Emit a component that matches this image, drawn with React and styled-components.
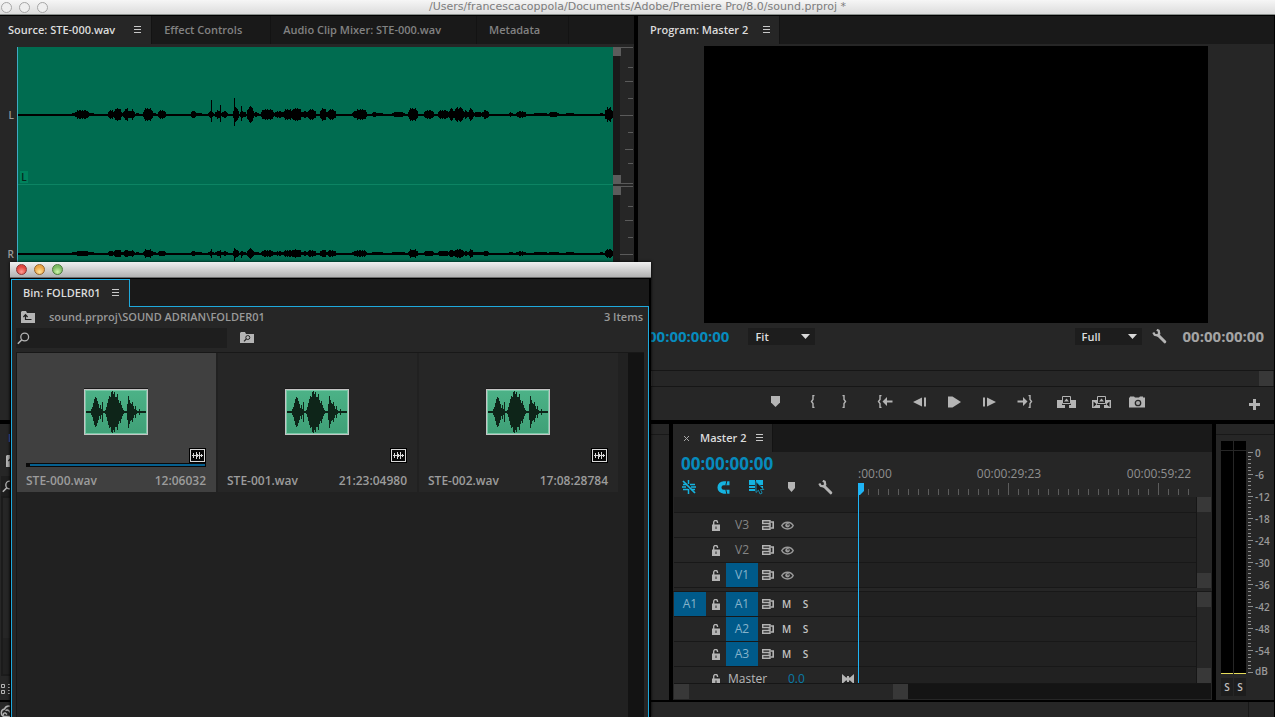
import React from "react";
import styled, { createGlobalStyle } from "styled-components";

const GlobalStyle = createGlobalStyle`
  * {
    box-sizing: border-box;
  }

  body {
    margin: 0;
    background-color: #000000;
    color: #9a9a9a;
    font-family: "Open Sans", "Noto Sans", sans-serif;
    font-size: 11px;
    font-weight: 600;
    line-height: 16px;
    overflow: hidden;
  }

  button,
  input,
  select {
    margin: 0;
    padding: 0;
    border: 0;
    background: none;
    color: inherit;
    font: inherit;
  }

  svg {
    display: block;
  }
`;

/* ---------- layout ---------- */

const StyledApp = styled.div`
  position: relative;
  display: flex;
  flex-direction: column;
  height: 100vh;
  overflow: hidden;
`;

const TitleBar = styled.header`
  display: grid;
  grid-template-columns: 1fr auto 1fr;
  align-items: center;
  height: 15px;
  margin-bottom: 1px;
  background: linear-gradient(#f6f6f6, #dcdcdc);
  border-bottom: 1px solid #8a8f8c;

  h1 {
    margin: 0;
    color: #7d7d7d;
    font-family: "DejaVu Sans", sans-serif;
    font-size: 11px;
    font-weight: 400;
    line-height: 14px;
  }
`;

const Lights = styled.div`
  display: flex;
  gap: 7px;
  padding-left: ${(props) => props.$inset}px;
`;

const Light = styled.button`
  width: 11px;
  height: 11px;
  border: 1px solid ${(props) => props.$edge};
  border-radius: 50%;
  background: ${(props) => props.$fill};
`;

const Workspace = styled.main`
  flex: 1;
  display: grid;
  grid-template-rows: 404fr 276fr;
  gap: 4px;
  min-height: 0;
  padding-right: 1px;
`;

const Row = styled.div`
  display: grid;
  grid-template-columns: ${(props) => props.$columns};
  gap: 4px;
  min-height: 0;
`;

const Panel = styled.section`
  display: flex;
  flex-direction: column;
  min-width: 0;
  min-height: 0;
  background-color: #262626;
  overflow: hidden;
`;

const StatusBar = styled.footer`
  display: flex;
  justify-content: space-between;
  height: 15px;
  margin: 2px 1px 0 0;
  background-color: #262626;

  svg {
    margin-top: 3px;
  }

  div {
    width: 26px;
    border-left: 1px solid #181818;
  }
`;

const TabBar = styled.div`
  display: flex;
  flex: none;
  height: 28px;
  background-color: #191919;
`;

const Tab = styled.button`
  display: flex;
  align-items: center;
  gap: ${(props) => props.$gap}px;
  padding: 0 ${(props) => props.$right}px 0 ${(props) => props.$left}px;
  background-color: ${(props) => (props.$active ? "#262626" : "transparent")};
  color: ${(props) => (props.$active ? "#dcdcdc" : "#828282")};
  border-right: 1px solid #131313;
  white-space: nowrap;
`;

const IconButton = styled.button`
  display: flex;
  flex: none;
  align-items: center;
  justify-content: center;
  width: ${(props) => props.$width || 24}px;
  height: 20px;
  color: ${(props) => props.$color || "#b4b4b4"};
`;

const Timecode = styled.div`
  flex: none;
  padding-bottom: 2px;
  color: ${(props) => props.$color};
  font-size: ${(props) => props.$size}px;
  font-weight: 700;
  line-height: 18px;
`;

/* ---------- source monitor ---------- */

const SourceBody = styled.div`
  display: grid;
  grid-template-columns: 17px 1fr 7px 14px;
  grid-auto-rows: 139px;
  margin-top: 3px;
`;

const ChannelName = styled.span`
  align-self: center;
  padding: 0 3px 4px 0;
  text-align: right;
  font-size: 10px;
  line-height: 14px;
`;

const Channel = styled.div`
  display: flex;
  align-items: flex-end;
  position: relative;
  background: linear-gradient(#006c50 137px, #0c8463 137px, #0c8463 138px, #006c50 138px);
  border-left: 1px solid #3fa9c4;

  svg {
    position: absolute;
    inset: 0;
    width: 100%;
    height: 138px;
  }

  label {
    width: 8px;
    height: 12px;
    margin: 0 0 3px 2px;
    background-color: #00825c;
    color: #06251b;
    font-size: 10px;
    line-height: 12px;
    text-align: center;
  }
`;

const ZoomBar = styled.div`
  display: flex;
  flex-direction: column;
  justify-content: space-between;
  height: 137px;
  background-color: #1a1a1a;

  i {
    width: 8px;
    height: 9px;
    background-color: #5c5c5c;
  }
`;

/* ---------- program monitor ---------- */

const Screen = styled.div`
  flex: 1;
  margin: 2px 66px 0;
  background-color: #000000;
`;

const MonitorBar = styled.div`
  display: flex;
  align-items: center;
  height: 27px;
  padding: 0 10px;
`;

const Spacer = styled.div`
  flex: ${(props) => (props.$width ? `0 0 ${props.$width}px` : 1)};
`;

const SelectBox = styled.label`
  position: relative;
  width: 67px;
  height: 17px;
  margin: 0 8px 0 ${(props) => props.$left}px;
  background-color: #1d1d1d;
  color: #dedede;

  select {
    width: 100%;
    height: 17px;
    padding-left: 7px;
    appearance: none;
    outline: 0;
  }

  svg {
    position: absolute;
    top: 6px;
    right: 5px;
    pointer-events: none;
  }
`;

const MonitorScroll = styled.div`
  display: flex;
  justify-content: space-between;
  height: 17px;
  margin-top: 20px;
  padding-right: 1px;
  border: solid #161616;
  border-width: 1px 0;

  i {
    width: 14px;
    background-color: #383838;
  }
`;

const Transport = styled.div`
  display: grid;
  grid-template-columns: 1fr auto 1fr;
  align-items: center;
  height: 33px;
  padding: 0 4px 4px 0;

  > button {
    justify-self: end;
    margin-top: 5px;
  }
`;

const ButtonGroup = styled.div`
  display: flex;
  gap: 11px;

  & + & {
    margin-left: ${(props) => props.$space}px;
  }
`;

const TransportButtons = styled.div`
  grid-column: 2;
  display: flex;
`;

/* ---------- project panel behind the bin ---------- */

const ProjectEdge = styled.div`
  flex: 1;
  display: flex;
  flex-direction: column;
  padding-left: 1px;
  color: #b4b4b4;
`;

const ProjectTitle = styled.span`
  padding: 6px 0 0 7px;
  color: #4463b8;
`;

const ProjectIcons = styled.div`
  display: flex;
  align-items: center;
  height: ${(props) => props.$height}px;
  padding-left: ${(props) => props.$left}px;
  background-color: ${(props) => props.$fill || "transparent"};
`;

const ProjectList = styled.div`
  flex: 1;
  border: 2px solid #1b1b1b;
  background: linear-gradient(#262626 140px, #212121 140px);
`;

const ToolsLine = styled.div`
  height: 11px;
  border-bottom: 1px solid #181818;
`;

/* ---------- timeline ---------- */

const TimelineHead = styled.div`
  display: grid;
  grid-template-columns: 185px 1fr;
  flex: none;
  height: 45px;
`;

const TimelineTools = styled.div`
  padding: 3px 0 0 8px;
`;

const ToolRow = styled.div`
  display: flex;
  gap: 10px;
  height: 20px;
  margin: 2px 0 0 -4px;
`;

const Ruler = styled.div`
  position: relative;
  overflow: hidden;
  color: #8f8f8f;
  font-size: 12px;

  span {
    position: absolute;
    top: 14px;
    font-weight: 400;
    transform: translateX(-50%);
  }

  span:first-child {
    transform: none;
  }

  svg {
    position: absolute;
    left: 0;
    bottom: 2px;
  }
`;

const TrackSection = styled.div`
  display: grid;
  grid-template-columns: 185px 1fr 16px;
  flex: ${(props) => props.$flex};
  min-height: 0;
  overflow: hidden;
`;

const TrackDivider = styled.div`
  flex: none;
  height: 4px;
  border-bottom: 1px solid #181818;
`;

const TrackList = styled.div`
  display: flex;
  flex-direction: column;
  justify-content: ${(props) => (props.$end ? "flex-end" : "flex-start")};
  min-height: 0;
  padding-left: 1px;
  background-color: ${(props) => props.$fill};
  overflow: hidden;
`;

const Track = styled.div`
  display: flex;
  flex: none;
  align-items: center;
  height: 25px;
  border-bottom: 1px solid #181818;
  color: #b8b8b8;
`;

const EmptyTrack = styled(Track)`
  background-color: #212121;
`;

const Patch = styled.button`
  flex: none;
  width: 32px;
  height: 24px;
  margin-right: ${(props) => props.$right || 0}px;
  background-color: ${(props) => (props.$on ? "#005a8a" : "transparent")};
  color: ${(props) => (props.$on ? "#86b3cb" : "#858585")};
  font-size: 12px;
  font-weight: 400;
`;

const LetterButton = styled.button`
  width: 19px;
  color: #c4c4c4;
  font-size: 10px;
`;

const MasterName = styled.span`
  width: 60px;
  margin-left: 2px;
  font-size: 12px;
  font-weight: 400;
  line-height: 12px;
`;

const MasterLevel = styled.span`
  flex: 1;
  color: #0a7ba6;
  font-size: 12px;
  font-weight: 400;
  line-height: 12px;
`;

const VScroll = styled.div`
  display: flex;
  flex-direction: column;
  justify-content: space-between;
  margin-right: 1px;
  border-left: 1px solid #161616;

  i {
    height: 15px;
    background-color: #383838;
  }
`;

const HScroll = styled.div`
  flex: none;
  height: 16px;
  margin: 0 1px 1px;
  border-top: 1px solid #161616;
  background-color: #141414;

  div {
    display: flex;
    justify-content: space-between;
    width: 234px;
    height: 15px;
    background-color: #262626;
  }

  i {
    width: 15px;
    background-color: #383838;
  }
`;

const TimelineBody = styled.div`
  position: relative;
  display: flex;
  flex: 1;
  flex-direction: column;
  min-height: 0;
`;

const Playhead = styled.div`
  position: absolute;
  top: 31px;
  bottom: 17px;
  left: 185px;
  width: 1px;
  background-color: #1fb4f5;
`;

/* ---------- meters ---------- */

const Meters = styled.div`
  display: grid;
  grid-template-columns: 26px 6px 1fr;
  flex: 1;
  min-height: 0;
  margin: 6px 0 0 5px;
`;

const MeterColumn = styled.div`
  display: flex;
  flex-direction: column;
  gap: 1px;
`;

const MeterPair = styled.div`
  display: flex;
  gap: 1px;
  height: ${(props) => props.$height};
  flex: ${(props) => (props.$height ? "none" : 1)};

  i {
    width: 12px;
    background-color: #000000;
    border-bottom: ${(props) => (props.$height ? "0" : "1px solid #e6dc5a")};
  }
`;

const SoloPair = styled.div`
  display: flex;
  gap: 1px;
  height: 18px;
  margin: 3px 0 4px;

  button {
    width: 12px;
    background-color: #1d1d1d;
    color: #c0c0c0;
    font-size: 10px;
  }
`;

const MeterLabels = styled.div`
  display: flex;
  flex-direction: column;
  gap: 8px;
  margin-top: 5px;
  padding-left: 2px;
  font-size: 10px;
  line-height: 14px;

  span:last-child {
    margin-top: -2px;
  }
`;

/* ---------- floating bin window ---------- */

const BinWindow = styled.section`
  position: absolute;
  top: 262px;
  bottom: 0;
  left: 10px;
  display: flex;
  flex-direction: column;
  width: 641px;
  background-color: #000000;
  box-shadow: 0 0 3px #000000;
`;

const BinTitle = styled.div`
  display: flex;
  flex: none;
  align-items: center;
  height: 16px;
  margin-bottom: 1px;
  background: linear-gradient(#f0f0f0, #b2b2b2);
  border-bottom: 1px solid #6c6c6c;
`;

const BinTabs = styled.div`
  display: flex;
  flex: none;
  height: 28px;
  margin: 0 2px 0 1px;
  background-color: #191919;

  > div {
    flex: 1;
    border-bottom: 1px solid #1fa9dc;
  }
`;

const BinTab = styled.button`
  display: flex;
  align-items: center;
  gap: 12px;
  padding: 0 10px 2px 11px;
  background-color: #262626;
  border: solid #1fa9dc;
  border-width: 1px 1px 0 1px;
  color: #dcdcdc;
`;

const BinBody = styled.div`
  display: flex;
  flex: 1;
  flex-direction: column;
  min-height: 0;
  margin: 0 2px 0 1px;
  padding: 0 4px;
  background-color: #262626;
  border: solid #1fa9dc;
  border-width: 0 1px;
`;

const BinPath = styled.div`
  display: flex;
  align-items: center;
  height: 21px;
  padding: 0 1px 2px 5px;
  color: #999999;

  span:last-child {
    margin-left: auto;
  }

  svg {
    margin-right: 14px;
    color: #b4b4b4;
  }
`;

const BinSearch = styled.div`
  display: flex;
  align-items: center;
  gap: 8px;
  height: 20px;
  margin-bottom: 4px;

  label {
    display: flex;
    align-items: center;
    width: 211px;
    height: 20px;
    padding-left: 1px;
    background-color: #1e1e1e;
    color: #b4b4b4;
  }

  input {
    flex: 1;
    padding-left: 6px;
    outline: 0;
  }
`;

const BinGrid = styled.div`
  display: flex;
  flex: 1;
  min-height: 0;
  border-top: 1px solid #181818;
  border-left: 1px solid #181818;
  background-color: #212121;
`;

const BinItems = styled.div`
  display: grid;
  grid-template-columns: repeat(3, 199px);
  gap: 2px;
  flex: 1;
  align-content: start;
`;

const BinScroll = styled.div`
  width: 16px;
  background-color: #131313;
`;

const StyledClip = styled.article`
  display: flex;
  flex-direction: column;
  height: 139px;
  padding: 36px 10px 0 9px;
  background-color: ${(props) => (props.$selected ? "#404040" : "#262626")};
`;

const Thumb = styled.div`
  align-self: center;
  width: 64px;
  height: 46px;
  background: linear-gradient(#4cb287, #3fa077);
  border: 1px solid #c4c4c4;
  box-shadow: 0 -1px 0 #1a1a1a, inset 0 0 0 1px #79c9a7;

  svg {
    margin: -1px;
  }
`;

const ClipBadge = styled.div`
  align-self: flex-end;
  margin-top: 13px;
`;

const Scrub = styled.div`
  height: 4px;
  padding: 1px 1px 1px 4px;
  background-color: ${(props) => (props.$shown ? "#0a0a0a" : "transparent")};

  div {
    height: 2px;
    background-color: ${(props) => (props.$shown ? "#065f8e" : "transparent")};
  }
`;

const ClipText = styled.div`
  display: flex;
  justify-content: space-between;
  margin-top: 6px;
  color: #9c9c9c;
  font-size: 12px;
`;

/* ---------- icons ---------- */

const MenuIcon = () => (
  <svg width="7" height="8" fill="#c8c8c8" shapeRendering="crispEdges">
    <path d="M0 0h7v1H0zM0 3h7v1H0zM0 6h7v1H0z" />
  </svg>
);

const WrenchIcon = () => (
  <svg width="15" height="15" viewBox="0 0 15 15" fill="none" stroke="currentColor">
    <path d="M6.500 6.500l6.300 6.300" strokeWidth="3" strokeLinecap="round" />
    <path d="M1.300 3.500l1.400 2.300 2.800.6 1.700-1.800-.5-2.800L4.800.8" strokeWidth="2.300" />
  </svg>
);

const SearchIcon = () => (
  <svg width="13" height="13" viewBox="0 0 13 13" fill="none" stroke="currentColor">
    <circle cx="7.700" cy="5" r="3.900" strokeWidth="1.300" />
    <path d="M4.800 7.800L.8 11.800" strokeWidth="1.600" />
  </svg>
);

const FolderUpIcon = () => (
  <svg width="14" height="12" viewBox="0 0 14 12">
    <path d="M0 1l1-1h4l1 2h8v10H0z" fill="currentColor" />
    <path d="M10.500 8.500h-6V4M2.400 6L4.500 3.700 6.600 6" fill="none" stroke="#1d1d1d" strokeWidth="1.200" />
  </svg>
);

const FolderFindIcon = () => (
  <svg width="14" height="12" viewBox="0 0 14 12">
    <path d="M0 1l1-1h4l1 2h8v9H0z" fill="currentColor" />
    <g fill="none" stroke="#242424">
      <circle cx="7.800" cy="5.500" r="2" />
      <path d="M6.300 7L4 9.300" strokeWidth="1.200" />
    </g>
  </svg>
);

const MarkerIcon = ({ width = 9, height = 11 }) => (
  <svg width={width} height={height} viewBox="0 0 9 11" preserveAspectRatio="none" fill="currentColor">
    <path d="M0 0h9v6.500L4.500 11 0 6.500z" />
  </svg>
);

const LEFT_BRACE = "M4.500.5H3v4L1.500 6.500 3 8.500v4h1.500";
const RIGHT_BRACE = "M.5.5H2v4l1.500 2L2 8.500v4H.5";

const BraceIcon = ({ right }) => (
  <svg width="5" height="13" viewBox="0 0 5 13" fill="none" stroke="currentColor" strokeWidth="1.400">
    <path d={right ? RIGHT_BRACE : LEFT_BRACE} />
  </svg>
);

const GoInIcon = () => (
  <svg width="16" height="13" viewBox="0 0 16 13">
    <path d={LEFT_BRACE} fill="none" stroke="currentColor" strokeWidth="1.400" />
    <path d="M5.500 6.500L10 2v3.500h5.500v2H10V11z" fill="currentColor" />
  </svg>
);

const GoOutIcon = () => (
  <svg width="16" height="13" viewBox="0 0 16 13">
    <path d="M11.500.5H13v4l1.500 2-1.500 2v4h-1.500" fill="none" stroke="currentColor" strokeWidth="1.400" />
    <path d="M10.500 6.500L6 2v3.500H.5v2H6V11z" fill="currentColor" />
  </svg>
);

const StepBackIcon = () => (
  <svg width="13" height="10" viewBox="0 0 13 10" fill="currentColor">
    <path d="M0 5l9-4.500v9zM11 .5h2v9h-2z" />
  </svg>
);

const StepForwardIcon = () => (
  <svg width="13" height="10" viewBox="0 0 13 10" fill="currentColor">
    <path d="M13 5L4 .5v9zM0 .5h2v9H0z" />
  </svg>
);

const PlayIcon = () => (
  <svg width="13" height="12" viewBox="0 0 13 12" fill="currentColor">
    <path d="M0 .5h4.500L13 6l-8.500 5.500H0z" />
  </svg>
);

const BLOCKS = "M0 4h5v5h3v3H0zM14 4h5v8h-7V9h2z";

const LiftIcon = () => (
  <svg width="19" height="12" viewBox="0 0 19 12" fill="currentColor">
    <path d={BLOCKS} />
    <path d="M5.500.5h8v7h-8z" fill="#222222" stroke="currentColor" />
    <path d="M9.500 2.500L12 5.500H7z" />
  </svg>
);

const ExtractIcon = () => (
  <svg width="19" height="12" viewBox="0 0 19 12" fill="currentColor">
    <path d={BLOCKS} />
    <path d="M5.500.5h8v7h-8z" fill="#222222" stroke="currentColor" />
    <path d="M9.500 2.500L12 5.500H7z" />
    <path d="M1.500 5.500l3 2.700-3 2.700zM17.500 5.500l-3 2.700 3 2.700z" fill="#1a1a1a" />
  </svg>
);

const CameraIcon = () => (
  <svg width="16" height="12" viewBox="0 0 16 12">
    <path d="M0 1.500h1V.5h4l1 1h4l1-1h3v1h2v10H0z" fill="currentColor" />
    <circle cx="9" cy="7" r="2.700" fill="#a8a8a8" stroke="#262626" strokeWidth="1.300" />
  </svg>
);

const PlusIcon = () => (
  <svg width="11" height="11" fill="currentColor" shapeRendering="crispEdges">
    <path d="M4 0h3v4h4v3H7v4H4V7H0V4h4z" />
  </svg>
);

const NestIcon = () => (
  <svg width="14" height="14" viewBox="0 0 14 14" fill="none" stroke="currentColor">
    <path d="M1 4.500h4M8 4.500h5M1 9.500h5M9 9.500h4M6.500 0v4M6.500 9v5M0 7h4M9 7h5" strokeWidth="1.500" />
    <path d="M1 1l12 12" strokeWidth="1.700" />
  </svg>
);

const SnapIcon = () => (
  <svg width="13" height="13" viewBox="0 0 13 13" fill="none">
    <path d="M12.500 2.200H6.700a4.200 4.200 0 000 8.500h5.800" stroke="currentColor" strokeWidth="4" />
    <path d="M9.800 0l-1 4.500M8.800 8.300l1 4.700" stroke="#262626" />
  </svg>
);

const LinkedIcon = () => (
  <svg width="16" height="15" viewBox="0 0 16 15">
    <path d="M0 0h6v5H0zM7 0h7v5H7zM0 6h6v2H0zM0 9h6v2H0zM11 6h3v3h-3z" fill="currentColor" />
    <path
      d="M7 1.500v11l2.400-2.300 1.700 3.800 2-.9-1.600-3.600h3.300z"
      fill="#1c1c1c"
      stroke="currentColor"
      strokeWidth=".7"
    />
  </svg>
);

const LockIcon = () => (
  <svg width="8" height="11" viewBox="0 0 8 11">
    <path d="M1.700 5V2.500a1.900 1.900 0 013.800-.2V3" fill="none" stroke="currentColor" strokeWidth="1.400" />
    <path d="M0 4.500h8V11H0z" fill="currentColor" />
    <path d="M3.500 6.500h1v2.500h-1z" fill="#262626" />
  </svg>
);

const SyncIcon = () => (
  <svg width="12" height="10" viewBox="0 0 12 10" fill="none" stroke="currentColor">
    <path d="M.7.700h7.300v2.800H.7zM.7 6.500h7.300v2.800H.7z" strokeWidth="1.400" />
    <path d="M6.500 5H9M8.500 2h2.700v6H8.500" strokeWidth="1.600" />
  </svg>
);

const EyeIcon = () => (
  <svg width="13" height="9" viewBox="0 0 13 9">
    <path
      d="M.8 4.500C3 0 10 0 12.200 4.500 10 9 3 9 .8 4.500z"
      fill="none"
      stroke="#9a9a9a"
      strokeWidth="1.500"
    />
    <circle cx="6.500" cy="4.200" r="2.200" fill="#9a9a9a" />
    <circle cx="7" cy="3.800" r=".8" fill="#262626" />
  </svg>
);

const BowtieIcon = () => (
  <svg width="12" height="10" viewBox="0 0 12 10" fill="currentColor">
    <path d="M0 0l4 3.500h1V2h2v1.500h1L12 0v10L8 6.500H7V8H5V6.500H4L0 10z" />
  </svg>
);

const BadgeIcon = () => (
  <svg width="17" height="15" viewBox="0 0 17 15" shapeRendering="crispEdges">
    <path d="M0 0h17v15H0z" fill="#000000" />
    <path d="M1.500 1.500h14v12h-14z" fill="#080808" stroke="#d8d8d8" />
    <path d="M3 7h11v1H3zM4 5h1v5H4zM7 4h1v7H7zM8 6h1v3H8zM10 4h1v7h-1zM12 6h1v3h-1z" fill="#d8d8d8" />
  </svg>
);

const CloudIcon = () => (
  <svg width="16" height="12" viewBox="0 0 16 12" fill="none" stroke="#b4b4b4" strokeWidth="1.400">
    <path d="M4.500 11.500a3.800 3.800 0 010-7.500A5 5 0 0114 5.500v6z" />
    <path d="M7 9.500L5.500 8a1.600 1.600 0 00-2 2.300M5.500 5.500a3 3 0 014 1l3 3" />
  </svg>
);

/* ---------- wave forms ---------- */

// [start, end, amplitude] of every burst in the clip
const BURSTS = [
  [54, 58, 2], [57, 71, 4], [70, 76, 1], [90, 97, 4], [96, 104, 6], [104, 107, 3],
  [106, 112, 6], [112, 117, 5], [118, 121, 1], [125, 135, 6], [134, 138, 2], [140, 148, 4],
  [173, 178, 4], [178, 184, 1], [190, 196, 3], [197, 203, 4], [203, 210, 3], [215, 221, 7],
  [222, 228, 3], [229, 236, 8], [236, 241, 2], [243, 256, 5], [256, 266, 3], [265, 275, 5],
  [273, 284, 6], [283, 290, 3], [289, 298, 5], [302, 309, 6], [309, 318, 5], [334, 339, 3],
  [337, 349, 5], [354, 358, 3], [358, 365, 1], [374, 387, 2], [390, 400, 6], [406, 416, 4],
  [420, 431, 4], [431, 436, 7], [436, 446, 7], [446, 450, 5], [450, 456, 6], [456, 464, 2],
  [464, 471, 4], [491, 495, 2], [498, 508, 3], [516, 529, 1], [531, 541, 2], [548, 556, 1],
  [582, 585, 2], [587, 595, 7],
];

// [x, up, down]
const SPIKES = [[193, 15, 7], [202, 10, 7], [216, 17, 11], [223, 9, 6]];

const wavePath = (scale) => {
  let d = "M0 67h595v2H0z";
  BURSTS.forEach(([start, end, amp]) => {
    for (let x = start; x < end; x += 1) {
      const edge = Math.min(x - start + 2, end - x + 1, 4) / 4;
      const noise = 0.75 + ((x * 7) % 5) / 16;
      const h = Math.max(1, Math.round(amp * edge * noise * scale));
      d += `M${x} ${67 - h}h1v${h * 2 + 1}h-1z`;
    }
  });
  SPIKES.forEach(([x, up, down]) => {
    const top = Math.round(up * scale * scale);
    d += `M${x} ${68 - top}h1v${top + Math.round(down * scale)}h-1z`;
  });
  return d;
};

const THUMB_BARS = [
  1, 1, 1, 1, 1, 3, 5, 9, 13, 15, 14, 11, 8, 4, 7, 3, 10, 1, 1, 2, 5, 9, 13, 16, 15, 20, 21, 18,
  20, 15, 15, 18, 12, 9, 11, 7, 4, 2, 1, 1, 1, 8, 16, 12, 9, 8, 10, 6, 3, 6, 2, 1, 1, 3, 1, 1,
  1, 1, 1, 1,
];

const ThumbWave = () => (
  <svg width="64" height="46" fill="#0e2519" shapeRendering="crispEdges">
    {THUMB_BARS.map((h, i) => (
      <rect key={i} x={i + 2} y={23 - h} width="1" height={h * 2} />
    ))}
  </svg>
);

const Amplitude = () => (
  <svg width="14" height="139" stroke="#5a5a5a" shapeRendering="crispEdges">
    <path d="M0 .5h13M8 20.500h5M5 34.500h8M8 51.500h5M0 68.500h13M8 85.500h5M5 102.500h8M8 116.500h5M0 136.500h13" />
  </svg>
);

/* ---------- panels ---------- */

const SourcePanel = () => (
  <Panel>
    <TabBar>
      <Tab $active $left={8} $right={10} $gap={19}>
        Source: STE-000.wav
        <MenuIcon />
      </Tab>
      <Tab $left={12} $right={28}>Effect Controls</Tab>
      <Tab $left={12} $right={35}>Audio Clip Mixer: STE-000.wav</Tab>
      <Tab $left={12} $right={28}>Metadata</Tab>
    </TabBar>
    <SourceBody>
      {["L", "R"].map((name, i) => (
        <React.Fragment key={name}>
          <ChannelName>{name}</ChannelName>
          <Channel>
            <svg viewBox="0 0 595 138" preserveAspectRatio="none" shapeRendering="crispEdges">
              <path d={wavePath(i === 0 ? 1 : 0.6)} />
            </svg>
            {i === 0 && <label>L</label>}
          </Channel>
          <ZoomBar>
            <i />
            <i />
          </ZoomBar>
          <Amplitude />
        </React.Fragment>
      ))}
    </SourceBody>
  </Panel>
);

const Dropdown = ({ label, value, left }) => (
  <SelectBox $left={left}>
    <select aria-label={label} defaultValue={value}>
      <option>{value}</option>
    </select>
    <svg width="9" height="5" fill="#d8d8d8">
      <path d="M0 0h9L4.500 5z" />
    </svg>
  </SelectBox>
);

const ProgramPanel = () => (
  <Panel>
    <TabBar>
      <Tab $active $left={12} $right={9} $gap={15}>
        Program: Master 2
        <MenuIcon />
      </Tab>
    </TabBar>
    <Screen />
    <MonitorBar>
      <Timecode $size={15} $color="#078bbd">00:00:00:00</Timecode>
      <Dropdown label="Zoom level" value="Fit" left={19} />
      <Spacer />
      <Dropdown label="Playback resolution" value="Full" left={0} />
      <IconButton $width={20} aria-label="Settings">
        <WrenchIcon />
      </IconButton>
      <Spacer $width={13} />
      <Timecode $size={15} $color="#a4a4a4">00:00:00:00</Timecode>
    </MonitorBar>
    <MonitorScroll>
      <i />
      <i />
    </MonitorScroll>
    <Transport>
      <TransportButtons>
        <ButtonGroup>
          <IconButton $width={31} aria-label="Add marker"><MarkerIcon /></IconButton>
          <IconButton $width={21} aria-label="Mark in"><BraceIcon /></IconButton>
          <IconButton $width={21} aria-label="Mark out"><BraceIcon right /></IconButton>
        </ButtonGroup>
        <ButtonGroup $space={26}>
          <IconButton aria-label="Go to in"><GoInIcon /></IconButton>
          <IconButton aria-label="Step back"><StepBackIcon /></IconButton>
          <IconButton aria-label="Play"><PlayIcon /></IconButton>
          <IconButton aria-label="Step forward"><StepForwardIcon /></IconButton>
          <IconButton aria-label="Go to out"><GoOutIcon /></IconButton>
        </ButtonGroup>
        <ButtonGroup $space={18}>
          <IconButton aria-label="Lift"><LiftIcon /></IconButton>
          <IconButton aria-label="Extract"><ExtractIcon /></IconButton>
          <IconButton aria-label="Export frame"><CameraIcon /></IconButton>
        </ButtonGroup>
      </TransportButtons>
      <IconButton $width={31} aria-label="Button editor"><PlusIcon /></IconButton>
    </Transport>
  </Panel>
);

const ProjectPanel = () => (
  <Panel>
    <ProjectEdge>
      <ProjectTitle>P</ProjectTitle>
      <ProjectIcons $height={30} $left={5}>
        <FolderUpIcon />
      </ProjectIcons>
      <ProjectIcons $height={20} $left={1} $fill="#1e1e1e">
        <SearchIcon />
      </ProjectIcons>
      <ProjectList />
      <ProjectIcons $height={24} $left={0}>
        <svg width="20" height="11" fill="none" stroke="currentColor">
          <path d="M.5 1.500h3v3h-3zM.5 7.500h3v3h-3zM7 1.500h9M7 4.500h9M7 7.500h9M7 10.500h9" />
        </svg>
      </ProjectIcons>
    </ProjectEdge>
  </Panel>
);

const TRACKS = {
  video: [{ name: "V3" }, { name: "V2" }, { name: "V1", on: true }],
  audio: [
    { name: "A1", on: true, source: "A1" },
    { name: "A2", on: true },
    { name: "A3", on: true },
  ],
};

const TrackHeader = ({ name, on, source, audio }) => (
  <Track>
    <Patch $on={Boolean(source)}>{source}</Patch>
    <IconButton $width={20} aria-label={`Lock ${name}`}><LockIcon /></IconButton>
    <Patch $on={on} $right={1}>{name}</Patch>
    <IconButton $width={18} aria-label={`Sync lock ${name}`}><SyncIcon /></IconButton>
    {audio ? (
      <>
        <LetterButton>M</LetterButton>
        <LetterButton>S</LetterButton>
      </>
    ) : (
      <IconButton $width={20} aria-label={`Show ${name}`}><EyeIcon /></IconButton>
    )}
  </Track>
);

const RulerTicks = () => {
  const ticks = [];
  for (let x = 10; x <= 330; x += 10) {
    ticks.push(`M${x}.5 ${x === 150 || x === 300 ? 0 : 6}V12`);
  }
  return (
    <svg width="338" height="12" stroke="#5c5c5c" shapeRendering="crispEdges">
      <path d={ticks.join("")} />
    </svg>
  );
};

const TimelinePanel = () => (
  <Panel>
    <TabBar>
      <Tab $active $left={10} $right={9} $gap={10}>
        <svg width="7" height="7" stroke="#a8a8a8">
          <path d="M1 1l5 5M6 1L1 6" />
        </svg>
        <span>Master 2</span>
        <MenuIcon />
      </Tab>
    </TabBar>
    <TimelineBody>
      <TimelineHead>
        <TimelineTools>
          <Timecode $size={17} $color="#078bbd">00:00:00:00</Timecode>
          <ToolRow>
            <IconButton $color="#15b3e0" aria-label="Nest"><NestIcon /></IconButton>
            <IconButton $color="#15b3e0" aria-label="Snap"><SnapIcon /></IconButton>
            <IconButton $color="#15b3e0" aria-label="Linked selection"><LinkedIcon /></IconButton>
            <IconButton aria-label="Add marker"><MarkerIcon width={7} height={10} /></IconButton>
            <IconButton aria-label="Timeline settings"><WrenchIcon /></IconButton>
          </ToolRow>
        </TimelineTools>
        <Ruler>
          <span style={{ left: 0 }}>:00:00</span>
          <span style={{ left: 151 }}>00:00:29:23</span>
          <span style={{ left: 301 }}>00:00:59:22</span>
          <RulerTicks />
        </Ruler>
      </TimelineHead>
      <TrackSection $flex="0 0 91px">
        <TrackList $end $fill="#262626">
          <EmptyTrack />
          {TRACKS.video.map((track) => (
            <TrackHeader key={track.name} {...track} />
          ))}
        </TrackList>
        <TrackList $end $fill="#212121">
          <EmptyTrack />
          <EmptyTrack />
          <EmptyTrack />
          <EmptyTrack />
        </TrackList>
        <VScroll>
          <i />
          <i />
        </VScroll>
      </TrackSection>
      <TrackDivider />
      <TrackSection $flex="1 1 0">
        <TrackList $fill="#262626">
          {TRACKS.audio.map((track) => (
            <TrackHeader key={track.name} {...track} audio />
          ))}
          <Track>
            <Patch />
            <IconButton $width={20} aria-label="Lock master"><LockIcon /></IconButton>
            <MasterName>Master</MasterName>
            <MasterLevel>0.0</MasterLevel>
            <IconButton $width={20} aria-label="Master keyframes"><BowtieIcon /></IconButton>
          </Track>
        </TrackList>
        <TrackList $fill="#212121">
          <EmptyTrack />
          <EmptyTrack />
          <EmptyTrack />
        </TrackList>
        <VScroll>
          <i />
          <i />
        </VScroll>
      </TrackSection>
      <HScroll>
        <div>
          <i />
          <i />
        </div>
      </HScroll>
      <Playhead>
        <svg width="7" height="12" fill="#1fb4f5">
          <path d="M0 0h6v8L2 12H0z" />
        </svg>
      </Playhead>
    </TimelineBody>
  </Panel>
);

// six ticks to every 6 dB step
const MeterTicks = () => {
  const ticks = [];
  for (let i = 0; i <= 60; i += 1) {
    const y = Math.round((i * 22) / 6) + 11;
    ticks.push(`M1 ${y}.5h${i % 6 === 0 ? 5 : 3}`);
  }
  return (
    <svg width="6" height="234" stroke="#8c8c8c" shapeRendering="crispEdges">
      <path d={ticks.join("")} />
    </svg>
  );
};

const MetersPanel = () => (
  <Panel>
    <ToolsLine />
    <Meters>
      <MeterColumn>
        <MeterPair $height="9px">
          <i />
          <i />
        </MeterPair>
        <MeterPair>
          <i />
          <i />
        </MeterPair>
        <SoloPair>
          <button>S</button>
          <button>S</button>
        </SoloPair>
      </MeterColumn>
      <MeterTicks />
      <MeterLabels>
        {["0", "-6", "-12", "-18", "-24", "-30", "-36", "-42", "-48", "-54", "dB"].map((db) => (
          <span key={db}>{db}</span>
        ))}
      </MeterLabels>
    </Meters>
  </Panel>
);

const CLIPS = [
  { name: "STE-000.wav", length: "12:06032", selected: true },
  { name: "STE-001.wav", length: "21:23:04980" },
  { name: "STE-002.wav", length: "17:08:28784" },
];

const Clip = ({ name, length, selected }) => (
  <StyledClip $selected={selected}>
    <Thumb>
      <ThumbWave />
    </Thumb>
    <ClipBadge>
      <BadgeIcon />
    </ClipBadge>
    <Scrub $shown={selected}>
      <div />
    </Scrub>
    <ClipText>
      <span>{name}</span>
      <span>{length}</span>
    </ClipText>
  </StyledClip>
);

const Bin = () => (
  <BinWindow>
    <BinTitle>
      <Lights $inset={6}>
        <Light aria-label="Close" $edge="#8e3431" $fill="radial-gradient(circle at 50% 75%, #ff9d92, #e2473f 60%)" />
        <Light aria-label="Minimize" $edge="#95652b" $fill="radial-gradient(circle at 50% 75%, #ffe59a, #eda545 60%)" />
        <Light aria-label="Zoom" $edge="#4e7a3d" $fill="radial-gradient(circle at 50% 75%, #cdf5a9, #7dbb63 60%)" />
      </Lights>
    </BinTitle>
    <BinTabs>
      <BinTab>
        Bin: FOLDER01
        <MenuIcon />
      </BinTab>
      <div />
    </BinTabs>
    <BinBody>
      <BinPath>
        <FolderUpIcon />
        <span>sound.prproj\SOUND ADRIAN\FOLDER01</span>
        <span>3 Items</span>
      </BinPath>
      <BinSearch>
        <label>
          <SearchIcon />
          <input type="text" aria-label="Search bin" />
        </label>
        <IconButton aria-label="Find in bin"><FolderFindIcon /></IconButton>
      </BinSearch>
      <BinGrid>
        <BinItems>
          {CLIPS.map((clip) => (
            <Clip key={clip.name} {...clip} />
          ))}
        </BinItems>
        <BinScroll />
      </BinGrid>
    </BinBody>
  </BinWindow>
);

const App = () => {
  return (
    <StyledApp>
      <GlobalStyle />
      <TitleBar>
        <Lights $inset={1}>
          <Light aria-label="Close" $edge="#a6a6a6" $fill="#efefef" />
          <Light aria-label="Minimize" $edge="#a6a6a6" $fill="#efefef" />
          <Light aria-label="Zoom" $edge="#a6a6a6" $fill="#efefef" />
        </Lights>
        <h1>/Users/francescacoppola/Documents/Adobe/Premiere Pro/8.0/sound.prproj *</h1>
      </TitleBar>
      <Workspace>
        <Row $columns="634fr 636fr">
          <SourcePanel />
          <ProgramPanel />
        </Row>
        <Row $columns="634px 31px 1fr 58px">
          <ProjectPanel />
          <Panel>
            <ToolsLine />
          </Panel>
          <TimelinePanel />
          <MetersPanel />
        </Row>
      </Workspace>
      <StatusBar>
        <CloudIcon />
        <div />
      </StatusBar>
      <Bin />
    </StyledApp>
  );
};

export default App;
